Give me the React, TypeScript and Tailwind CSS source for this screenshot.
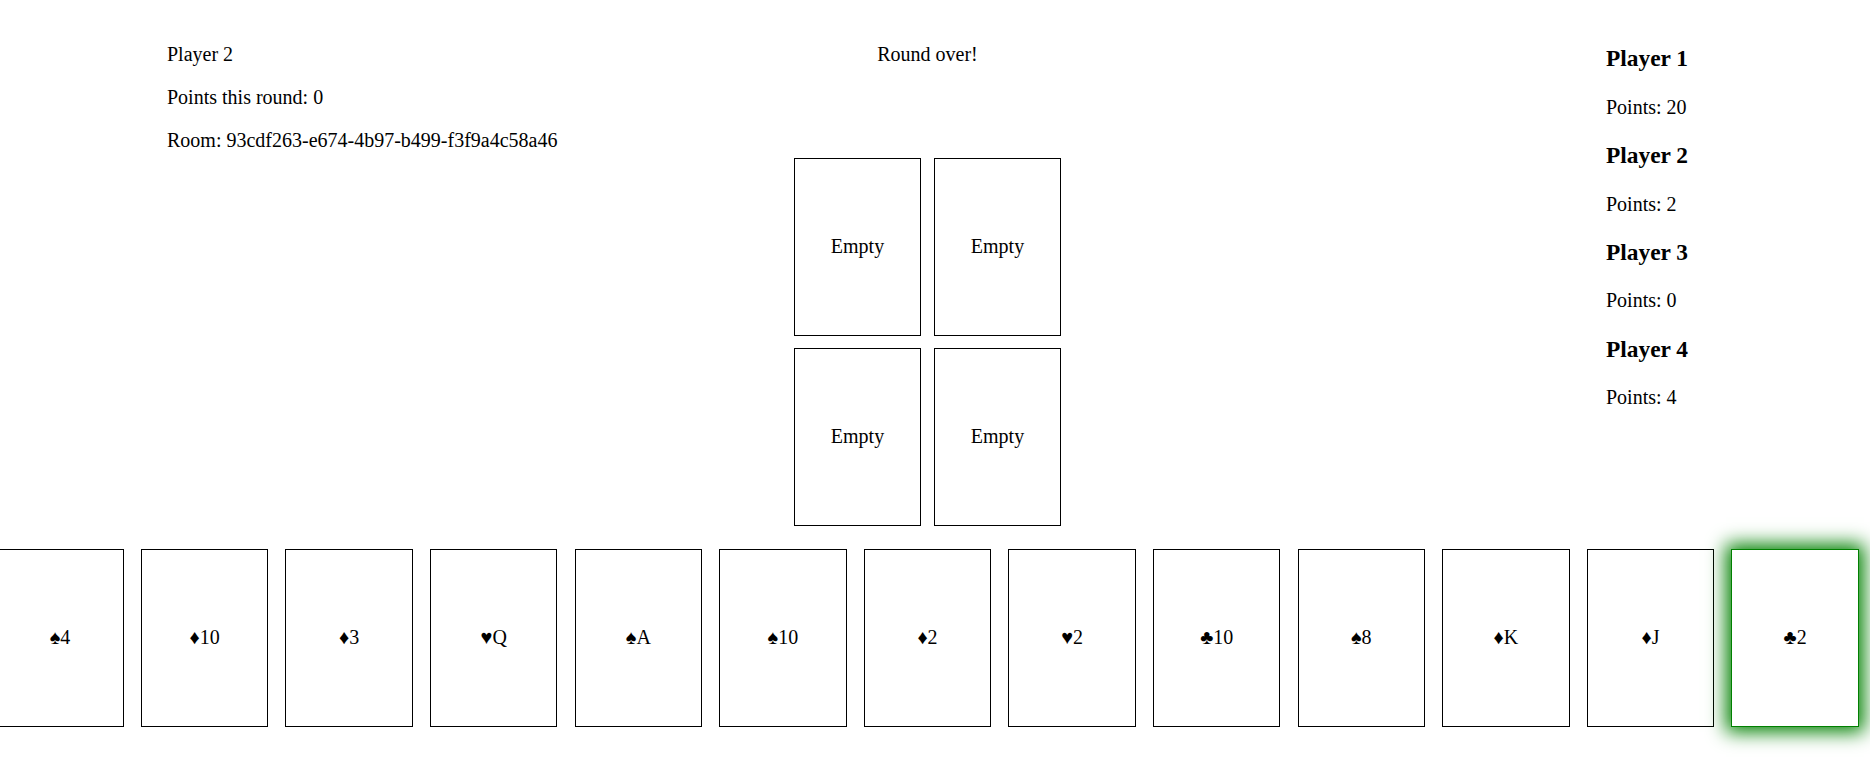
import React from 'react'

interface PlayerScore {
  name: string
  points: number
}

const scores: PlayerScore[] = [
  { name: 'Player 1', points: 20 },
  { name: 'Player 2', points: 2 },
  { name: 'Player 3', points: 0 },
  { name: 'Player 4', points: 4 },
]

const hand: string[] = ['♠4', '♦10', '♦3', '♥Q', '♠A', '♠10', '♦2', '♥2', '♣10', '♠8', '♦K', '♦J', '♣2']

const selectedIndex = 12

const Card: React.FC<{ label: string; selected?: boolean }> = ({ label, selected }) => (
  <div
    className={
      selected
        ? 'w-[127.5px] h-[177.5px] shrink-0 flex items-center justify-center bg-white border border-[#008000] shadow-[0_0_18px_5px_#008000]'
        : 'w-[127.5px] h-[177.5px] shrink-0 flex items-center justify-center bg-white border border-black'
    }
  >
    {label}
  </div>
)

const App: React.FC = () => {
  return (
    <div className="min-h-screen bg-white text-black font-['Liberation_Serif','Times_New_Roman',serif] text-[20px] leading-[normal]">
      <div className="w-[1855px]">
        {/* Header: player info, table, scoreboard */}
        <div className="grid grid-cols-3 items-start px-[167px] pt-[22px]">
          <div className="pt-[0.5px]">
            <p className="my-[20px]">Player 2</p>
            <p className="my-[20px]">Points this round: 0</p>
            <p className="my-[20px]">Room: 93cdf263-e674-4b97-b499-f3f9a4c58a46</p>
          </div>

          <div className="flex flex-col items-center">
            <p className="mt-[20.5px]">Round over!</p>
            <div className="grid grid-cols-2 gap-[12.5px] mt-[92.5px]">
              {['Empty', 'Empty', 'Empty', 'Empty'].map((slot, index) => (
                <Card key={index} label={slot} />
              ))}
            </div>
          </div>

          <div className="justify-self-end w-[82px] whitespace-nowrap">
            {scores.map((player) => (
              <div key={player.name}>
                <h3 className="text-[23.4px] font-bold my-[23.4px]">{player.name}</h3>
                <p className="my-[20px]">Points: {player.points}</p>
              </div>
            ))}
          </div>
        </div>

        {/* Hand */}
        <div className="flex justify-center gap-[17.1px] mt-[23.5px]">
          {hand.map((card, index) => (
            <Card key={index} label={card} selected={index === selectedIndex} />
          ))}
        </div>
      </div>
    </div>
  )
}

export default App
